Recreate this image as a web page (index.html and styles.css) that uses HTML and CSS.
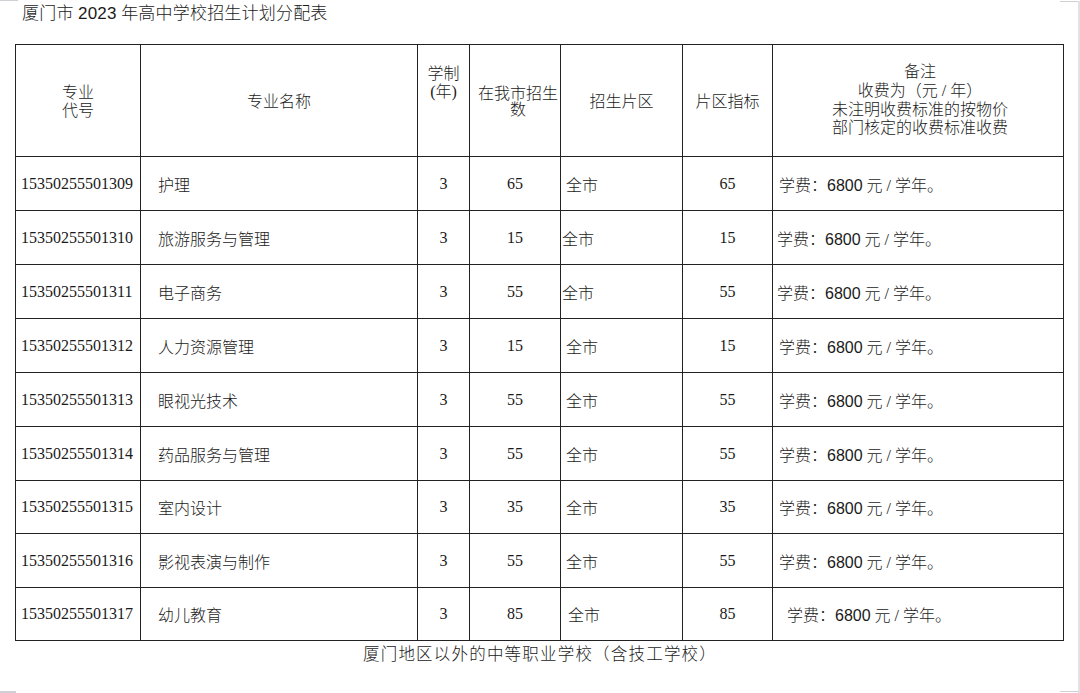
FILE: index.html
```html
<!DOCTYPE html>
<html lang="zh-CN">
<head>
<meta charset="utf-8">
<title>厦门市 2023 年高中学校招生计划分配表</title>
<link rel="stylesheet" href="styles.css">
</head>
<body>
<div class="page">
  <h1 class="title">厦门市 <span class="sans">2023</span> 年高中学校招生计划分配表</h1>
  <table class="plan">
    <colgroup>
      <col class="c-code"><col class="c-name"><col class="c-years"><col class="c-num"><col class="c-area"><col class="c-quota"><col class="c-note">
    </colgroup>
    <thead>
      <tr class="head">
        <th>专业<br>代号</th>
        <th>专业名称</th>
        <th class="top">学制<br>(年)</th>
        <th class="tight">在我市招生<br>数</th>
        <th>招生片区</th>
        <th>片区指标</th>
        <th class="note-head">备注<br>收费为（元 / 年）<br>未注明收费标准的按物价<br>部门核定的收费标准收费</th>
      </tr>
    </thead>
    <tbody>
      <tr><td class="code">15350255501309</td><td class="name">护理</td><td class="ctr">3</td><td class="ctr">65</td><td class="area">全市</td><td class="ctr">65</td><td class="fee">学费：<span class="sans">6800</span> 元 / 学年。</td></tr>
      <tr><td class="code">15350255501310</td><td class="name">旅游服务与管理</td><td class="ctr">3</td><td class="ctr">15</td><td class="area near">全市</td><td class="ctr">15</td><td class="fee near">学费：<span class="sans">6800</span> 元 / 学年。</td></tr>
      <tr><td class="code">15350255501311</td><td class="name">电子商务</td><td class="ctr">3</td><td class="ctr">55</td><td class="area near">全市</td><td class="ctr">55</td><td class="fee near">学费：<span class="sans">6800</span> 元 / 学年。</td></tr>
      <tr><td class="code">15350255501312</td><td class="name">人力资源管理</td><td class="ctr">3</td><td class="ctr">15</td><td class="area">全市</td><td class="ctr">15</td><td class="fee">学费：<span class="sans">6800</span> 元 / 学年。</td></tr>
      <tr><td class="code">15350255501313</td><td class="name">眼视光技术</td><td class="ctr">3</td><td class="ctr">55</td><td class="area">全市</td><td class="ctr">55</td><td class="fee">学费：<span class="sans">6800</span> 元 / 学年。</td></tr>
      <tr><td class="code">15350255501314</td><td class="name">药品服务与管理</td><td class="ctr">3</td><td class="ctr">55</td><td class="area">全市</td><td class="ctr">55</td><td class="fee">学费：<span class="sans">6800</span> 元 / 学年。</td></tr>
      <tr class="short"><td class="code">15350255501315</td><td class="name">室内设计</td><td class="ctr">3</td><td class="ctr">35</td><td class="area">全市</td><td class="ctr">35</td><td class="fee">学费：<span class="sans">6800</span> 元 / 学年。</td></tr>
      <tr><td class="code">15350255501316</td><td class="name">影视表演与制作</td><td class="ctr">3</td><td class="ctr">55</td><td class="area">全市</td><td class="ctr">55</td><td class="fee">学费：<span class="sans">6800</span> 元 / 学年。</td></tr>
      <tr class="short"><td class="code">15350255501317</td><td class="name">幼儿教育</td><td class="ctr">3</td><td class="ctr">85</td><td class="area far">全市</td><td class="ctr">85</td><td class="fee far">学费：<span class="sans">6800</span> 元 / 学年。</td></tr>
    </tbody>
  </table>
  <p class="footer">厦门地区以外的中等职业学校（含技工学校）</p>
  <div class="mark mark-tl"></div>
  <div class="mark mark-tr"></div>
  <div class="mark mark-rv"></div>
  <div class="mark mark-br"></div>
  <div class="mark mark-bl"></div>
</div>
</body>
</html>
```

FILE: styles.css
```css
* { box-sizing: border-box; }
html, body { margin: 0; padding: 0; background: #fff; }
body {
  font-family: "Liberation Serif", "Noto Sans CJK SC", serif;
  color: #1a1a1a;
  font-size: 16px;
  font-weight: 300;
}
.page {
  position: relative;
  width: 1080px;
  height: 693px;
  overflow: hidden;
}
.sans { font-family: "Liberation Sans", "Noto Sans CJK SC", sans-serif; }
.title {
  margin: 0;
  padding: 3px 0 0 22px;
  height: 44px;
  font-size: 17px;
  font-weight: 300;
  line-height: 22px;
  letter-spacing: 0.2px;
}
.plan {
  margin-left: 15px;
  width: 1048px;
  border-collapse: collapse;
  table-layout: fixed;
}
.plan th, .plan td {
  border: 1px solid #222;
  padding: 0;
  vertical-align: middle;
  white-space: nowrap;
  font-weight: 300;
}
.plan thead tr { height: 112px; }
.plan tbody tr { height: 54px; }
.plan tbody tr.short { height: 53px; }
.c-code { width: 125px; }
.c-name { width: 277px; }
.c-years { width: 52px; }
.c-num { width: 91px; }
.c-area { width: 122px; }
.c-quota { width: 90px; }
.c-note { width: 291px; }
.plan th {
  text-align: center;
  line-height: 18px;
  padding-top: 2px;
}
.plan th.top { vertical-align: top; padding-top: 20px; }
.plan th.tight { line-height: 16px; padding-left: 6px; }
.plan th.note-head { line-height: 18.7px; padding-top: 0; padding-left: 4px; }
.code { padding-left: 5px !important; }
.name { padding-left: 17px !important; }
.ctr { text-align: center; }
.area { padding-left: 5px !important; }
.area.near { padding-left: 1px !important; }
.area.far { padding-left: 7px !important; }
.fee { padding-left: 6px !important; }
.fee.near { padding-left: 4px !important; }
.fee.far { padding-left: 14px !important; }
.footer {
  width: 1048px;
  margin: 3px 0 0 15px;
  text-align: center;
  font-size: 16.5px;
  line-height: 22px;
  letter-spacing: 1.2px;
  padding-left: 2px;
}
.mark { position: absolute; background: #cfcfd4; }
.mark-tl { left: 0; top: 0; width: 18px; height: 1px; }
.mark-tr { left: 1060px; top: 1px; width: 19px; height: 1px; }
.mark-rv { left: 1078px; top: 1px; width: 2px; height: 692px; background: #e2e2e6; }
.mark-br { left: 1060px; top: 691px; width: 19px; height: 1px; }
.mark-bl { left: 0; top: 691px; width: 16px; height: 2px; }
```
